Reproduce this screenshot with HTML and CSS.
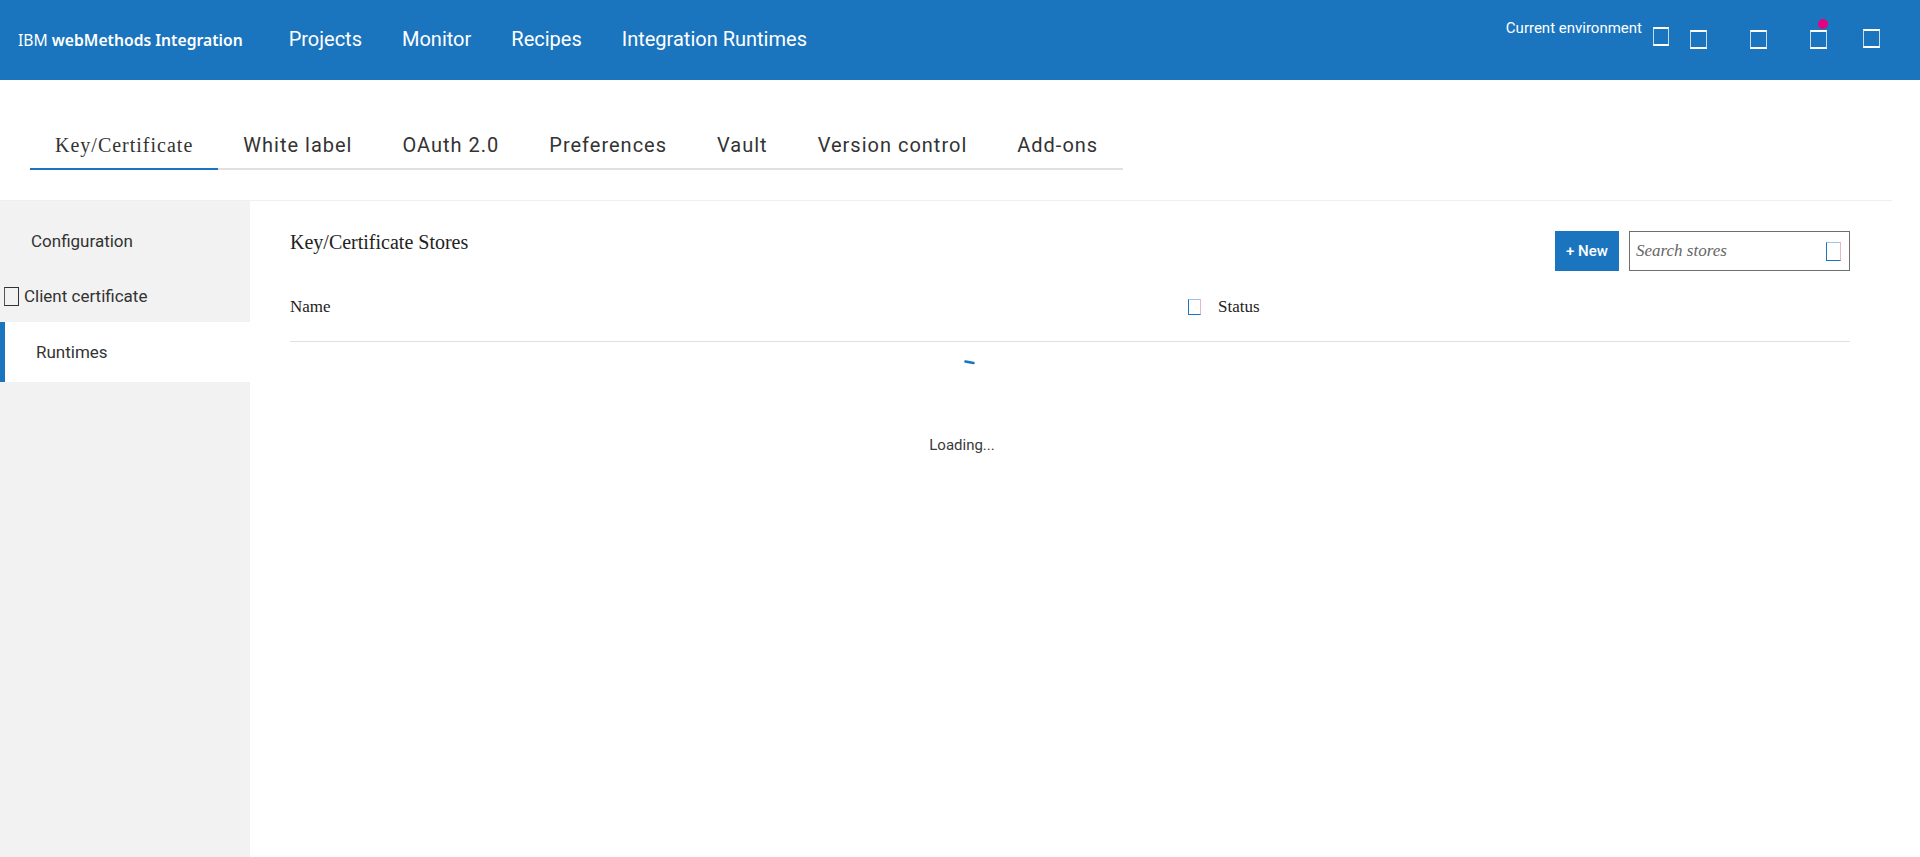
FILE: index.html
```html
<!DOCTYPE html>
<html lang="en">
<head>
<meta charset="utf-8">
<title>Key/Certificate - IBM webMethods Integration</title>
<link rel="stylesheet" href="styles.css">
</head>
<body>
<header class="topbar">
  <div class="brand"><span class="brand-ibm">IBM</span> <span class="brand-product">webMethods Integration</span></div>
  <nav class="mainnav">
    <a href="#">Projects</a>
    <a href="#">Monitor</a>
    <a href="#">Recipes</a>
    <a href="#">Integration Runtimes</a>
  </nav>
  <div class="topbar-right">
    <span class="env-label">Current environment</span>
    <span class="tofu tofu-light env-icon"></span>
    <span class="tofu tofu-light top-icon i2"></span>
    <span class="tofu tofu-light top-icon i3"></span>
    <span class="tofu tofu-light top-icon i4"><span class="badge-dot"></span></span>
    <span class="tofu tofu-light top-icon i5"></span>
  </div>
</header>

<section class="settings-tabs">
  <ul class="tabs">
    <li class="tab active">Key/Certificate</li>
    <li class="tab">White label</li>
    <li class="tab">OAuth 2.0</li>
    <li class="tab">Preferences</li>
    <li class="tab">Vault</li>
    <li class="tab">Version control</li>
    <li class="tab">Add-ons</li>
  </ul>
</section>

<div class="layout">
  <aside class="sidebar">
    <div class="side-item side-config">Configuration</div>
    <div class="side-item side-client"><span class="tofu tofu-dark"></span><span class="side-client-text">Client certificate</span></div>
    <div class="side-item side-runtimes">Runtimes</div>
  </aside>
  <main class="content">
    <div class="content-head">
      <h1 class="content-title">Key/Certificate Stores</h1>
      <div class="actions">
        <button class="btn-new">+ New</button>
        <div class="search">
          <input class="search-input" type="text" placeholder="Search stores">
          <span class="tofu tofu-blue search-icon"></span>
        </div>
      </div>
    </div>
    <div class="table-head">
      <div class="col-name">Name</div>
      <div class="col-status"><span class="tofu tofu-blue status-icon"></span><span class="status-text">Status</span></div>
    </div>
    <div class="loading">
      <div class="spinner-row"><svg class="spinner" width="11" height="7" viewBox="0 0 11 7"><path d="M1.5 2.5 L9.5 4" fill="none" stroke="#1a75be" stroke-width="2.6" stroke-linecap="round"/></svg></div>
      <div class="loading-text">Loading...</div>
    </div>
  </main>
</div>
</body>
</html>
```

FILE: styles.css
```css
* { box-sizing: border-box; }

html, body {
  margin: 0;
  padding: 0;
  background: #ffffff;
  font-family: Roboto, "Liberation Sans", sans-serif;
  color: #333333;
}

/* ---------- Top bar ---------- */
.topbar {
  display: flex;
  align-items: center;
  height: 80px;
  background: #1a75be;
  color: #ffffff;
  padding-left: 18px;
}

.brand {
  font-family: "Noto Sans", Roboto, sans-serif;
  font-size: 15.7px;
  line-height: 20px;
  margin-right: 46px;
  white-space: nowrap;
}
.brand-ibm { font-weight: 400; }
.brand-product { font-weight: 600; }

.mainnav {
  display: flex;
  gap: 40px;
  margin-top: -2px;
}
.mainnav a {
  color: #ffffff;
  text-decoration: none;
  font-size: 20px;
  line-height: 24px;
  white-space: nowrap;
}

.topbar-right {
  margin-left: auto;
  align-self: stretch;
  display: flex;
  align-items: flex-start;
  padding-top: 19px;
  padding-right: 40px;
}
.env-label {
  font-size: 15px;
  line-height: 18px;
  white-space: nowrap;
}

.tofu {
  display: inline-block;
  flex: none;
  position: relative;
}
.tofu-light {
  width: 17px;
  height: 19px;
  border: 2px solid #ffffff;
  border-left: 1px solid rgba(255, 255, 255, 0.75);
  border-right: 1.5px solid rgba(255, 255, 255, 0.75);
}
.env-icon { width: 16px; margin-left: 11px; margin-top: 8px; }
.top-icon { margin-top: 11px; }
.i2 { margin-left: 21px; }
.i3 { margin-left: 43px; }
.i4 { margin-left: 43px; }
.i5 { margin-left: 36px; margin-top: 10px; }

.badge-dot {
  position: absolute;
  left: 7px;
  top: -13px;
  width: 10px;
  height: 10px;
  border-radius: 50%;
  background: #e3037f;
}

/* ---------- Settings tabs ---------- */
.settings-tabs {
  height: 120px;
  padding-top: 53px;
  padding-left: 30px;
}
.tabs {
  display: inline-flex;
  list-style: none;
  margin: 0;
  padding: 0;
  border-bottom: 2px solid #e0e0e0;
}
.tab {
  padding: 0 25px 11px;
  margin-bottom: -2px;
  border-bottom: 2px solid transparent;
  font-size: 20px;
  line-height: 24px;
  letter-spacing: 1px;
  color: #333333;
  white-space: nowrap;
}
.tab.active {
  font-family: "Liberation Serif", serif;
  border-bottom-color: #1a75be;
}

/* ---------- Layout ---------- */
.layout {
  display: flex;
  width: 1892px;
  height: 657px;
  border-top: 1px solid #efefef;
}

.sidebar {
  width: 250px;
  flex: none;
  background: #f2f2f2;
}
.side-item {
  font-size: 17px;
  line-height: 20px;
  color: #333333;
  white-space: nowrap;
}
.side-config {
  padding-top: 30px;
  padding-left: 31px;
}
.side-client {
  margin-top: 35px;
  padding-left: 4px;
  display: flex;
  align-items: center;
}
.tofu-dark {
  width: 15px;
  height: 19px;
  border: 1.5px solid #333333;
  border-left-color: #555;
}
.side-client-text { margin-left: 5px; }
.side-runtimes {
  margin-top: 16px;
  height: 60px;
  line-height: 60px;
  background: #ffffff;
  border-left: 5px solid #1a75be;
  padding-left: 31px;
}

/* ---------- Content ---------- */
.content {
  flex: 1;
  padding: 30px 42px 0 40px;
}
.content-head {
  display: flex;
  justify-content: space-between;
  align-items: flex-start;
  height: 40px;
}
.content-title {
  margin: 0;
  padding-top: 0;
  font-family: "Liberation Serif", serif;
  font-size: 20px;
  line-height: 23px;
  font-weight: normal;
  color: #222222;
}
.actions {
  display: flex;
  gap: 10px;
}
.btn-new {
  width: 64px;
  height: 40px;
  padding: 0;
  border: 0;
  background: #1a75be;
  color: #ffffff;
  font-family: Roboto, sans-serif;
  font-size: 15px;
  font-weight: 500;
}
.search {
  width: 221px;
  height: 40px;
  border: 1px solid #6f6f6f;
  display: flex;
  align-items: center;
  padding: 0 8px 0 6px;
}
.search-input {
  flex: 1;
  min-width: 0;
  border: 0;
  outline: none;
  padding: 0;
  background: transparent;
  font-family: "Liberation Serif", serif;
  font-style: italic;
  font-size: 17px;
  color: #555555;
}
.search-input::placeholder { color: #666666; }
.tofu-blue {
  border: 1.5px solid #1a75be;
  border-top-color: #9fc3e6;
  border-right-color: #e8b6d2;
}
.search-icon { width: 15px; height: 19px; }

.table-head {
  display: flex;
  padding: 26px 0 24px;
  border-bottom: 1px solid #e0e0e0;
  font-family: "Liberation Serif", serif;
  font-size: 17px;
  line-height: 20px;
  color: #222222;
}
.col-name { width: 898px; flex: none; }
.col-status {
  display: flex;
  align-items: center;
}
.status-icon { width: 13px; height: 16px; }
.status-text { margin-left: 17px; }

.loading {
  padding-right: 216px;
  text-align: center;
}
.spinner-row {
  height: 23px;
  padding-top: 17px;
}
.spinner {
  display: inline-block;
  vertical-align: top;
  margin-left: 15px;
}
.loading-text {
  margin-top: 71px;
  font-size: 15px;
  line-height: 18px;
  color: #3a3a3a;
}
```
